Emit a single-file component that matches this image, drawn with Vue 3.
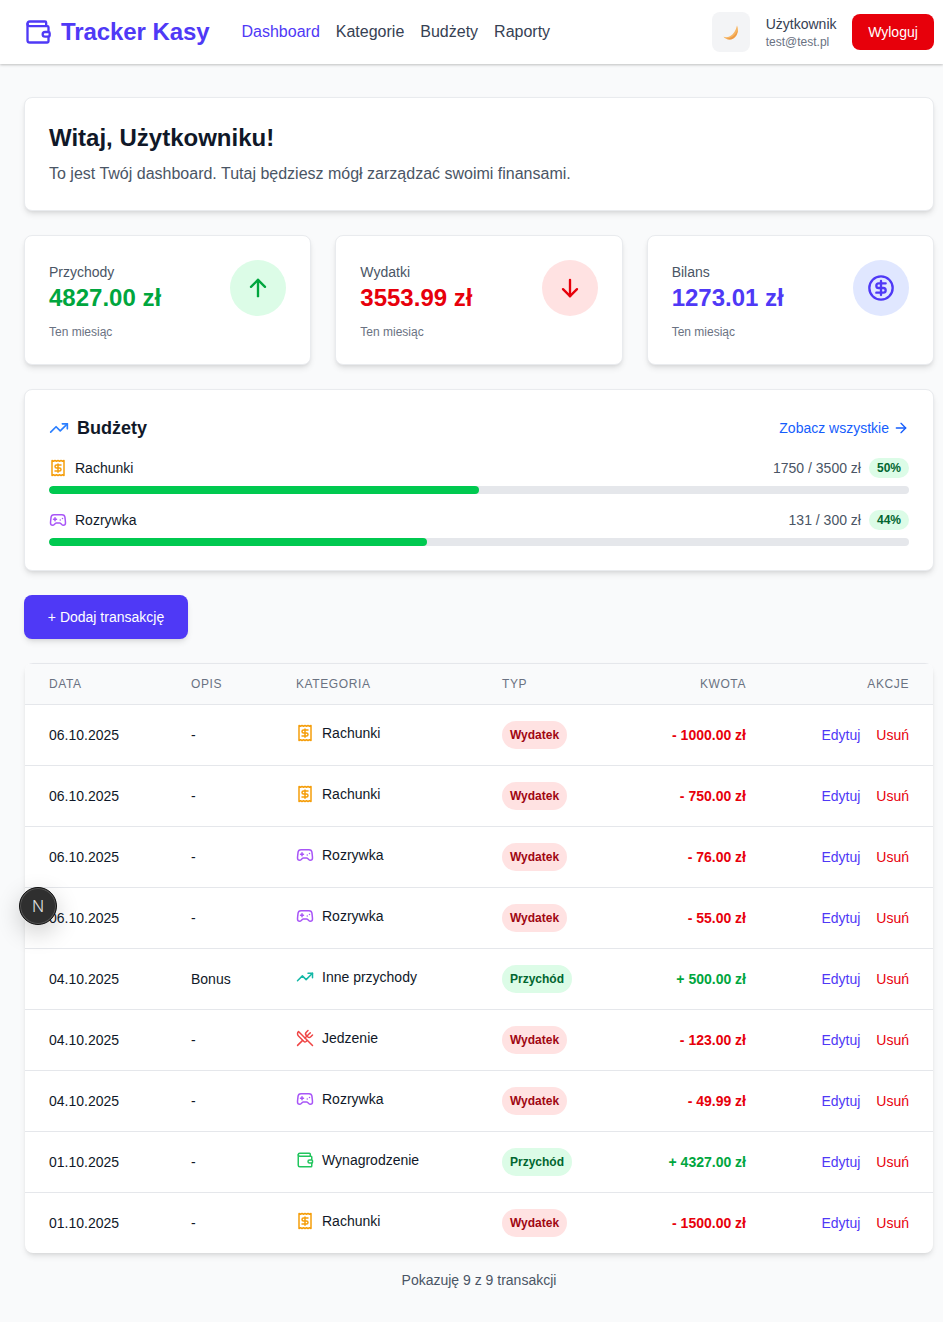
<template>
  <div class="page">
    <!-- header -->
    <header class="topbar">
      <div class="topbar-left">
        <a class="logo">
          <svg class="logo-icon" viewBox="0 0 24 24"><path d="M19 7V4a1 1 0 0 0-1-1H5a2 2 0 0 0 0 4h15a1 1 0 0 1 1 1v4h-3a2 2 0 0 0 0 4h3a1 1 0 0 0 1-1v-2a1 1 0 0 0-1-1" /><path d="M3 5v14a2 2 0 0 0 2 2h15a1 1 0 0 0 1-1v-4" /></svg>
          <span>Tracker Kasy</span>
        </a>
        <nav class="nav">
          <a v-for="link in links" :key="link" class="nav-link" :class="{ active: link === 'Dashboard' }">{{ link }}</a>
        </nav>
      </div>
      <div class="topbar-right">
        <button class="theme-btn">
          <svg viewBox="0 0 16 16" width="16" height="16"><path d="M14 1.500C16.500 7 14 15 7 15.500 4.500 15.600 2 14.800.5 12.800 2.500 13.500 5 13.300 7 12.300 10.500 10.500 13 6.500 14 1.500z" fill="#f6b562" /><path d="M14.800 6C14.500 10.500 11.500 15.200 7 15.500 5.500 15.600 4 15.300 2.800 14.700 8 14.800 12.800 11 14.800 6z" fill="#ee9a45" /></svg>
        </button>
        <div class="user">
          <div class="user-name">Użytkownik</div>
          <div class="user-mail">test@test.pl</div>
        </div>
        <button class="logout">Wyloguj</button>
      </div>
    </header>

    <main class="content">
      <section class="card welcome">
        <h1>Witaj, Użytkowniku!</h1>
        <p>To jest Twój dashboard. Tutaj będziesz mógł zarządzać swoimi finansami.</p>
      </section>

      <!-- podsumowanie -->
      <section class="stats">
        <div v-for="stat in stats" :key="stat.label" class="card stat">
          <div class="stat-top">
            <div>
              <div class="stat-label">{{ stat.label }}</div>
              <div class="stat-value" :class="stat.tone">{{ stat.value }}</div>
            </div>
            <div class="stat-icon" :class="stat.tone">
              <svg viewBox="0 0 24 24" width="28" height="28" class="ico">
                <template v-if="stat.tone === 'up'"><path d="m6 11 6-6 6 6" /><path d="M12 19V5" /></template>
                <template v-else-if="stat.tone === 'down'"><path d="M12 5v14" /><path d="m18 13-6 6-6-6" /></template>
                <template v-else><circle cx="12" cy="12" r="10" /><path d="M16 8h-6a2 2 0 1 0 0 4h4a2 2 0 1 1 0 4H8" /><path d="M12 18V6" /></template>
              </svg>
            </div>
          </div>
          <div class="stat-note">Ten miesiąc</div>
        </div>
      </section>

      <!-- budzety -->
      <section class="card budgets">
        <div class="budgets-head">
          <h2>
            <svg class="ico trend" viewBox="0 0 24 24" width="20" height="20"><path d="M16 7h6v6" /><path d="m22 7-8.500 8.500-5-5L2 17" /></svg>
            Budżety
          </h2>
          <a class="see-all">
            Zobacz wszystkie
            <svg class="ico" viewBox="0 0 24 24" width="16" height="16"><path d="M5 12h14" /><path d="m12 5 7 7-7 7" /></svg>
          </a>
        </div>
        <div v-for="b in budgets" :key="b.name" class="budget">
          <div class="budget-row">
            <div class="budget-name">
              <svg class="ico cat-icon" :style="{ color: icons[b.icon].color }" viewBox="0 0 24 24" width="18" height="18"><path v-for="d in icons[b.icon].paths" :key="d" :d="d" /></svg>
              {{ b.name }}
            </div>
            <div class="budget-sum">
              <span>{{ b.sum }}</span>
              <span class="pct">{{ b.pct }}%</span>
            </div>
          </div>
          <div class="bar"><div class="bar-fill" :style="{ width: b.pct + '%' }"></div></div>
        </div>
      </section>

      <button class="add-btn">+ Dodaj transakcję</button>

      <!-- transakcje -->
      <div class="table-wrap">
        <table>
          <colgroup>
            <col class="col-date" /><col class="col-desc" /><col class="col-cat" /><col class="col-type" /><col class="col-amount" /><col class="col-actions" />
          </colgroup>
          <thead>
            <tr>
              <th>Data</th>
              <th>Opis</th>
              <th>Kategoria</th>
              <th>Typ</th>
              <th class="right">Kwota</th>
              <th class="right">Akcje</th>
            </tr>
          </thead>
          <tbody>
            <tr v-for="(t, i) in transactions" :key="i">
              <td>{{ t.date }}</td>
              <td>{{ t.desc }}</td>
              <td>
                <div class="cat">
                  <svg class="ico cat-icon" :style="{ color: icons[t.icon].color }" viewBox="0 0 24 24" width="18" height="18"><path v-for="d in icons[t.icon].paths" :key="d" :d="d" /></svg>
                  {{ t.cat }}
                </div>
              </td>
              <td><span class="type" :class="t.income ? 'income' : 'expense'">{{ t.income ? 'Przychód' : 'Wydatek' }}</span></td>
              <td class="right amount" :class="t.income ? 'income' : 'expense'">{{ t.amount }}</td>
              <td class="right actions"><a class="edit">Edytuj</a><a class="del">Usuń</a></td>
            </tr>
          </tbody>
        </table>
      </div>

      <div class="footer-note">Pokazuję 9 z 9 transakcji</div>
    </main>

    <!-- dev indicator -->
    <div class="dev-badge"><span>N</span></div>
  </div>
</template>

<script setup>
const links = ['Dashboard', 'Kategorie', 'Budżety', 'Raporty']

const stats = [
  { label: 'Przychody', value: '4827.00 zł', tone: 'up' },
  { label: 'Wydatki', value: '3553.99 zł', tone: 'down' },
  { label: 'Bilans', value: '1273.01 zł', tone: 'balance' },
]

const icons = {
  bill: {
    color: '#f59e0b',
    paths: ['M4 2v20l2-1 2 1 2-1 2 1 2-1 2 1 2-1 2 1V2l-2 1-2-1-2 1-2-1-2 1-2-1-2 1Z', 'M16 8h-6a2 2 0 1 0 0 4h4a2 2 0 1 1 0 4H8', 'M12 17.500v-11'],
  },
  game: {
    color: '#a855f7',
    paths: ['M6 11h4', 'M8 9v4', 'M15 12h.01', 'M18 10h.01', 'M17.320 5H6.680a4 4 0 0 0-3.978 3.590c-.006.052-.01.101-.017.152C2.604 9.416 2 14.456 2 16a3 3 0 0 0 3 3c1 0 1.500-.500 2-1l1.414-1.414A2 2 0 0 1 9.828 16h4.344a2 2 0 0 1 1.414.586L17 18c.500.500 1 1 2 1a3 3 0 0 0 3-3c0-1.545-.604-6.584-.685-7.258-.007-.05-.011-.1-.017-.151A4 4 0 0 0 17.320 5z'],
  },
  trend: {
    color: '#14b8a6',
    paths: ['M16 7h6v6', 'm22 7-8.500 8.500-5-5L2 17'],
  },
  food: {
    color: '#ef4444',
    paths: ['m16 2-2.300 2.300a3 3 0 0 0 0 4.200l1.800 1.800a3 3 0 0 0 4.200 0L22 8', 'M15 15 3.300 3.300a4.200 4.200 0 0 0 0 6l7.300 7.300c.7.7 2 .7 2.800 0L15 15Zm0 0 7 7', 'm2.100 21.800 6.400-6.300', 'm19 5-7 7'],
  },
  wallet: {
    color: '#22c55e',
    paths: ['M19 7V4a1 1 0 0 0-1-1H5a2 2 0 0 0 0 4h15a1 1 0 0 1 1 1v4h-3a2 2 0 0 0 0 4h3a1 1 0 0 0 1-1v-2a1 1 0 0 0-1-1', 'M3 5v14a2 2 0 0 0 2 2h15a1 1 0 0 0 1-1v-4'],
  },
}

const budgets = [
  { name: 'Rachunki', icon: 'bill', sum: '1750 / 3500 zł', pct: 50 },
  { name: 'Rozrywka', icon: 'game', sum: '131 / 300 zł', pct: 44 },
]

const transactions = [
  { date: '06.10.2025', desc: '-', cat: 'Rachunki', icon: 'bill', income: false, amount: '- 1000.00 zł' },
  { date: '06.10.2025', desc: '-', cat: 'Rachunki', icon: 'bill', income: false, amount: '- 750.00 zł' },
  { date: '06.10.2025', desc: '-', cat: 'Rozrywka', icon: 'game', income: false, amount: '- 76.00 zł' },
  { date: '06.10.2025', desc: '-', cat: 'Rozrywka', icon: 'game', income: false, amount: '- 55.00 zł' },
  { date: '04.10.2025', desc: 'Bonus', cat: 'Inne przychody', icon: 'trend', income: true, amount: '+ 500.00 zł' },
  { date: '04.10.2025', desc: '-', cat: 'Jedzenie', icon: 'food', income: false, amount: '- 123.00 zł' },
  { date: '04.10.2025', desc: '-', cat: 'Rozrywka', icon: 'game', income: false, amount: '- 49.99 zł' },
  { date: '01.10.2025', desc: '-', cat: 'Wynagrodzenie', icon: 'wallet', income: true, amount: '+ 4327.00 zł' },
  { date: '01.10.2025', desc: '-', cat: 'Rachunki', icon: 'bill', income: false, amount: '- 1500.00 zł' },
]
</script>

<style>
html,
body {
  margin: 0;
  background: #f9fafb;
}
</style>

<style scoped>
.page {
  position: relative;
  min-height: 1322px;
  background: #f9fafb;
  font-family: "Liberation Sans", Arial, sans-serif;
  color: #101828;
  overflow: hidden;
}

.ico {
  fill: none;
  stroke: currentColor;
  stroke-width: 2;
  stroke-linecap: round;
  stroke-linejoin: round;
  flex-shrink: 0;
}

.topbar {
  height: 64px;
  background: #fff;
  box-shadow: 0 1px 3px rgba(0, 0, 0, 0.15), 0 1px 2px rgba(0, 0, 0, 0.1);
  display: flex;
  align-items: center;
  justify-content: space-between;
  padding: 0 9px 0 24px;
}

.topbar-left {
  display: flex;
  align-items: center;
}

.logo {
  display: flex;
  align-items: center;
  gap: 9px;
  font-size: 24px;
  font-weight: 700;
  letter-spacing: -0.08px;
  color: #4f39f6;
}

.logo-icon {
  width: 28px;
  height: 28px;
  fill: none;
  stroke: #4f39f6;
  stroke-width: 2;
  stroke-linecap: round;
  stroke-linejoin: round;
}

.nav {
  display: flex;
  gap: 16px;
  margin-left: 32px;
}

.nav-link {
  font-size: 16px;
  color: #364153;
}

.nav-link.active {
  color: #4f39f6;
}

.topbar-right {
  display: flex;
  align-items: center;
}

.theme-btn {
  width: 38px;
  height: 40px;
  border: 0;
  padding: 0;
  border-radius: 8px;
  background: #f3f4f6;
  display: flex;
  align-items: center;
  justify-content: center;
}

.user {
  margin-left: 15.5px;
  margin-right: 15.5px;
}

.user-name {
  font-size: 14px;
  line-height: 20px;
  color: #364153;
}

.user-mail {
  font-size: 12px;
  line-height: 16px;
  color: #6a7282;
}

.logout {
  width: 82px;
  height: 36px;
  border: 0;
  border-radius: 8px;
  background: #e7000b;
  color: #fff;
  font-family: inherit;
  font-size: 14px;
}

.content {
  padding: 33px 9px 0 24px;
}

.card {
  background: #fff;
  border: 1px solid #e9ebee;
  border-radius: 8px;
  box-shadow: 0 4px 6px -1px rgba(0, 0, 0, 0.1), 0 2px 4px -2px rgba(0, 0, 0, 0.1);
}

.welcome {
  padding: 24px;
  margin-bottom: 24px;
}

.welcome h1 {
  margin: 0 0 8px;
  font-size: 24px;
  line-height: 32px;
  font-weight: 700;
}

.welcome p {
  margin: 0;
  font-size: 16px;
  line-height: 24px;
  color: #4a5565;
}

.stats {
  display: grid;
  grid-template-columns: repeat(3, 1fr);
  gap: 24px;
  margin-bottom: 24px;
}

.stat {
  padding: 24px;
}

.stat-top {
  display: flex;
  justify-content: space-between;
  align-items: center;
}

.stat-label {
  font-size: 14px;
  line-height: 20px;
  color: #4a5565;
}

.stat-value {
  font-size: 24px;
  line-height: 32px;
  font-weight: 700;
}

.stat-value.up {
  color: #00a63e;
}

.stat-value.down {
  color: #e7000b;
}

.stat-value.balance {
  color: #4f39f6;
}

.stat-icon {
  width: 56px;
  height: 56px;
  border-radius: 50%;
  display: flex;
  align-items: center;
  justify-content: center;
}

.stat-icon.up {
  background: #dcfce7;
  color: #00a63e;
}

.stat-icon.down {
  background: #ffe2e2;
  color: #e7000b;
}

.stat-icon.balance {
  background: #e0e7ff;
  color: #4f39f6;
}

.stat-note {
  margin-top: 8px;
  font-size: 12px;
  line-height: 16px;
  color: #6a7282;
}

.budgets {
  padding: 24px;
  margin-bottom: 24px;
}

.budgets-head {
  display: flex;
  justify-content: space-between;
  align-items: center;
  margin-bottom: 16px;
}

.budgets-head h2 {
  margin: 0;
  display: flex;
  align-items: center;
  gap: 8px;
  font-size: 18px;
  line-height: 28px;
  font-weight: 700;
}

.trend {
  color: #2b7fff;
}

.see-all {
  display: flex;
  align-items: center;
  gap: 4px;
  font-size: 14px;
  color: #155dfc;
}

.budget + .budget {
  margin-top: 16px;
}

.budget-row {
  display: flex;
  justify-content: space-between;
  align-items: center;
  height: 20px;
  margin-bottom: 8px;
}

.budget-name {
  display: flex;
  align-items: center;
  gap: 8px;
  font-size: 14px;
}

.budget-sum {
  display: flex;
  align-items: center;
  gap: 8px;
  font-size: 14px;
  color: #4a5565;
}

.pct {
  padding: 2px 8px;
  border-radius: 9999px;
  background: #dcfce7;
  color: #016630;
  font-size: 12px;
  line-height: 16px;
  font-weight: 700;
}

.bar {
  height: 8px;
  border-radius: 9999px;
  background: #e5e7eb;
  overflow: hidden;
}

.bar-fill {
  height: 100%;
  border-radius: 9999px;
  background: #00c950;
}

.add-btn {
  display: block;
  width: 164px;
  height: 44px;
  border: 0;
  border-radius: 8px;
  background: #4f39f6;
  color: #fff;
  font-family: inherit;
  font-size: 14px;
  box-shadow: 0 4px 6px -1px rgba(0, 0, 0, 0.1), 0 2px 4px -2px rgba(0, 0, 0, 0.1);
  margin-bottom: 24px;
}

.table-wrap {
  background: #fff;
  margin: 0 1px;
  border-radius: 8px;
  overflow: hidden;
  box-shadow: 0 4px 6px -1px rgba(0, 0, 0, 0.1), 0 2px 4px -2px rgba(0, 0, 0, 0.1);
}

table {
  width: 908px;
  table-layout: fixed;
  border-collapse: collapse;
  font-size: 14px;
}

.col-date {
  width: 142px;
}

.col-desc {
  width: 105px;
}

.col-cat {
  width: 206px;
}

.col-type {
  width: 118px;
}

.col-amount {
  width: 174px;
}

.col-actions {
  width: 163px;
}

th {
  height: 40px;
  padding: 0 24px;
  background: #f9fafb;
  border-top: 1px solid #e5e7eb;
  border-bottom: 1px solid #e5e7eb;
  color: #6a7282;
  font-size: 12px;
  font-weight: 400;
  letter-spacing: 0.6px;
  text-transform: uppercase;
  text-align: left;
}

td {
  height: 60px;
  padding: 0 24px;
  border-bottom: 1px solid #e5e7eb;
}

tbody tr:last-child td {
  border-bottom: 0;
}

th.right,
td.right {
  text-align: right;
}

.cat {
  display: flex;
  align-items: center;
  gap: 8px;
  position: relative;
  top: -2px;
}

.type {
  display: inline-block;
  padding: 6px 8px;
  border-radius: 9999px;
  font-size: 12px;
  line-height: 16px;
  font-weight: 700;
}

.type.income {
  background: #dcfce7;
  color: #016630;
}

.type.expense {
  background: #ffe2e2;
  color: #9f0712;
}

.amount {
  font-weight: 700;
}

.amount.income {
  color: #00a63e;
}

.amount.expense {
  color: #e7000b;
}

.edit {
  color: #4f39f6;
}

.del {
  margin-left: 16px;
  color: #e7000b;
}

.footer-note {
  margin-top: 17px;
  text-align: center;
  font-size: 14px;
  line-height: 20px;
  color: #4a5565;
}

.dev-badge {
  position: absolute;
  left: 19px;
  top: 887px;
  width: 38px;
  height: 38px;
  box-sizing: border-box;
  border-radius: 50%;
  background: #2f2f2f;
  border: 1px solid #111;
  box-shadow: inset 0 0 0 1px #555, 0 8px 24px rgba(0, 0, 0, 0.2);
  color: #dcdcdc;
  font-family: Inter, "Liberation Sans", sans-serif;
  font-size: 16px;
  font-weight: 300;
  display: flex;
  align-items: center;
  justify-content: center;
}
</style>
